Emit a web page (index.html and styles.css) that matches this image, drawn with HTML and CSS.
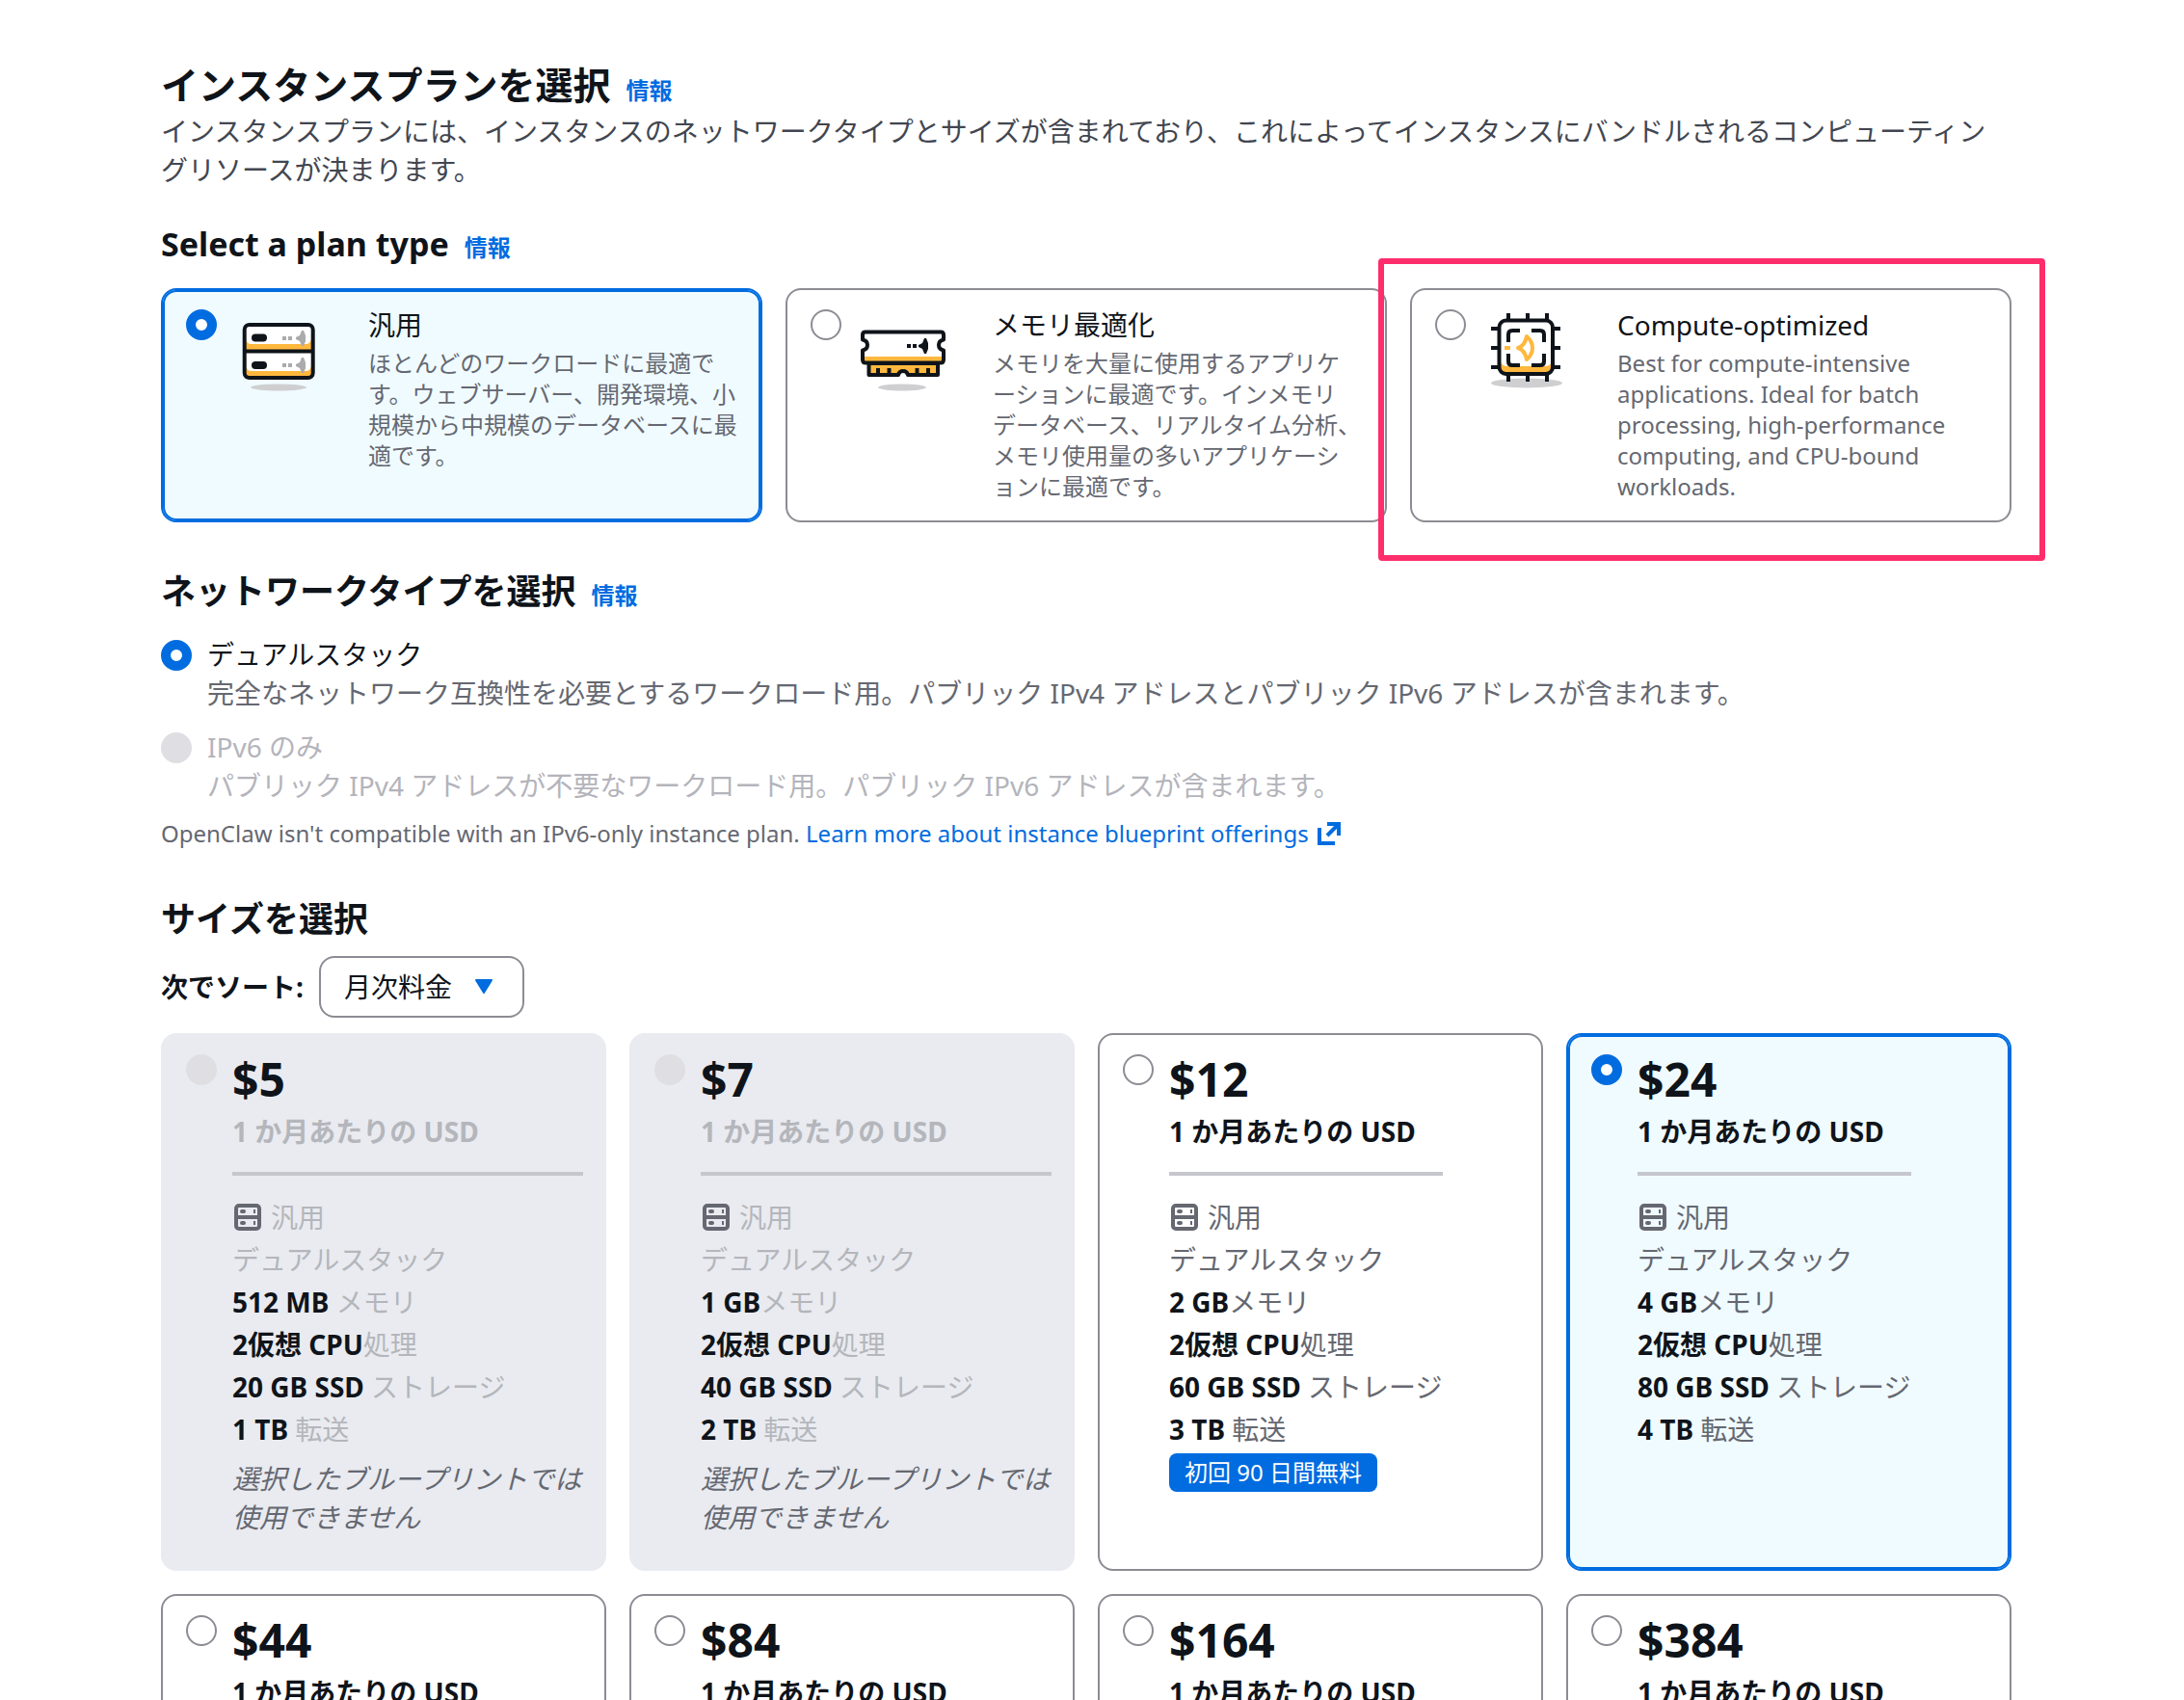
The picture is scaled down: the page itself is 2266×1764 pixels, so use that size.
FILE: index.html
```html
<!DOCTYPE html>
<html lang="ja">
<head>
    <meta charset="UTF-8">
    <meta name="viewport" content="width=device-width, initial-scale=1.0">
    <title>インスタンスプランを選択</title>
    <link rel="stylesheet" href="styles.css">
</head>
<body>
    <svg class="sprite" aria-hidden="true">
        <symbol id="icon-server" viewBox="0 0 16 16">
            <rect x="2" y="2" width="12" height="12" rx="1.5" fill="none" stroke="currentColor" stroke-width="2"/>
            <path d="M2 8h12" stroke="currentColor" stroke-width="2"/>
            <rect x="4" y="4" width="3" height="2" rx="1" fill="currentColor"/>
            <rect x="4" y="10" width="3" height="2" rx="1" fill="currentColor"/>
            <path d="M11.5 4v2M11.5 10v2" stroke="currentColor"/>
        </symbol>
    </svg>

    <main class="page">
        <header class="intro">
            <div class="title-row">
                <h1 class="page-title">インスタンスプランを選択</h1>
                <a class="info" href="#">情報</a>
            </div>
            <p class="page-desc">インスタンスプランには、インスタンスのネットワークタイプとサイズが含まれており、これによってインスタンスにバンドルされるコンピューティングリソースが決まります。</p>
        </header>

        <section class="plan-section">
            <div class="title-row">
                <h2 class="section-title plan-title">Select a plan type</h2>
                <a class="info" href="#">情報</a>
            </div>
            <div class="plan-grid">
                <label class="card plan selected">
                    <input class="radio" type="radio" name="plan" checked>
                    <svg class="plan-icon" viewBox="0 0 96 96" aria-hidden="true">
                        <ellipse cx="48" cy="85" rx="29" ry="3.5" fill="#cfcfd1"/>
                        <rect x="12.7" y="20" width="71" height="55" rx="5" fill="#fff"/>
                        <path d="M14 35q1 5 6 5h56q5 0 6-5v12H14zM14 63q1 5 6 5h56q5 0 6-5v12H14z" fill="#ffb83d"/>
                        <rect x="12.7" y="20" width="71" height="55" rx="5" fill="none" stroke="#0f141a" stroke-width="4"/>
                        <path d="M13 47.5h70" stroke="#0f141a" stroke-width="4"/>
                        <rect x="20" y="29.5" width="16" height="8" rx="4" fill="#0f141a"/>
                        <rect x="20" y="58" width="16" height="8" rx="4" fill="#0f141a"/>
                        <path d="M52 32h4v4h-4zM58 32h4v4h-4zM66 33l4-2 2-5h2l2 5v6l-2 5h-2l-2-5-4-2z" fill="#ababad"/>
                        <path d="M52 60h4v4h-4zM58 60h4v4h-4zM66 61l4-2 2-5h2l2 5v6l-2 5h-2l-2-5-4-2z" fill="#ababad"/>
                    </svg>
                    <span class="plan-text">
                        <span class="plan-name">汎用</span>
                        <span class="plan-desc">ほとんどのワークロードに最適で<br>す。ウェブサーバー、開発環境、小<br>規模から中規模のデータベースに最<br>適です。</span>
                    </span>
                </label>
                <label class="card plan">
                    <input class="radio" type="radio" name="plan">
                    <svg class="plan-icon" viewBox="0 0 96 96" aria-hidden="true">
                        <ellipse cx="47" cy="85" rx="25" ry="3.5" fill="#cfcfd1"/>
                        <path d="M12.5 60h71.5v12H53q-1-4-5-4t-5 4H12.5z" fill="#ffb83d" stroke="#0f141a" stroke-width="4" stroke-linejoin="round"/>
                        <path d="M22 65v7M33.5 65v7M62.5 65v7M74 65v7" stroke="#0f141a" stroke-width="4"/>
                        <path d="M9 27.5h78q3 0 3 3v5q-5 1-5 5.500t5 5.500V56q0 3.5-3 3.5H9q-3 0-3-3.500v-9.500q5-1 5-5.500t-5-5.500v-5q0-3 3-3z" fill="#fff"/>
                        <path d="M7 53h82v5H7z" fill="#ffb83d"/>
                        <path d="M9 27.5h78q3 0 3 3v5q-5 1-5 5.500t5 5.500V56q0 3.5-3 3.5H9q-3 0-3-3.500v-9.500q5-1 5-5.500t-5-5.500v-5q0-3 3-3z" fill="none" stroke="#0f141a" stroke-width="4" stroke-linejoin="round"/>
                        <path d="M52 40h4v4h-4zM58 40h4v4h-4zM64 41l4-2 2-5h2l2 5v6l-2 5h-2l-2-5-4-2z" fill="#0f141a"/>
                    </svg>
                    <span class="plan-text">
                        <span class="plan-name">メモリ最適化</span>
                        <span class="plan-desc">メモリを大量に使用するアプリケ<br>ーションに最適です。インメモリ<br>データベース、リアルタイム分析、<br>メモリ使用量の多いアプリケーシ<br>ョンに最適です。</span>
                    </span>
                </label>
                <label class="card plan highlighted">
                    <input class="radio" type="radio" name="plan">
                    <svg class="plan-icon" viewBox="0 0 96 96" aria-hidden="true">
                        <ellipse cx="47" cy="80.5" rx="37" ry="5" fill="#cfcfd1"/>
                        <path d="M28 8v71M48 8v71M68 8v71M10 24h72M10 44h72M10 64h72" stroke="#0f141a" stroke-width="4"/>
                        <rect x="18.5" y="15.5" width="55.5" height="55.5" rx="7" fill="#fff"/>
                        <path d="M20 59q2 4 7 4h39q5 0 7-4v10H20z" fill="#ffb83d"/>
                        <rect x="18.5" y="15.5" width="55.5" height="55.5" rx="7" fill="none" stroke="#0f141a" stroke-width="4"/>
                        <path d="M28 38V30q0-4 4-4h8M52 26h9q4 0 4 4v8M65 50v8q0 4-4 4h-9M40 62h-8q-4 0-4-4v-8" fill="none" stroke="#0f141a" stroke-width="4"/>
                        <path d="M38 44q7-2 9-12 6 5 6 12t-6 12q-2-10-9-12z" fill="none" stroke="#ffb83d" stroke-width="4" stroke-linejoin="round"/>
                        <path d="M24 42h6v4h-6z" fill="#ffb83d"/>
                    </svg>
                    <span class="plan-text">
                        <span class="plan-name">Compute-optimized</span>
                        <span class="plan-desc">Best for compute-intensive<br>applications. Ideal for batch<br>processing, high-performance<br>computing, and CPU-bound<br>workloads.</span>
                    </span>
                </label>
            </div>
        </section>

        <section class="network-section">
            <div class="title-row">
                <h2 class="section-title">ネットワークタイプを選択</h2>
                <a class="info" href="#">情報</a>
            </div>
            <div class="network-list">
                <label class="network">
                    <input class="radio" type="radio" name="network" checked>
                    <span class="network-text">
                        <span class="network-name">デュアルスタック</span>
                        <span class="network-desc">完全なネットワーク互換性を必要とするワークロード用。パブリック IPv4 アドレスとパブリック IPv6 アドレスが含まれます。</span>
                    </span>
                </label>
                <label class="network disabled">
                    <input class="radio" type="radio" name="network" disabled>
                    <span class="network-text">
                        <span class="network-name">IPv6 のみ</span>
                        <span class="network-desc">パブリック IPv4 アドレスが不要なワークロード用。パブリック IPv6 アドレスが含まれます。</span>
                    </span>
                </label>
            </div>
            <p class="note">OpenClaw isn't compatible with an IPv6-only instance plan. <a class="link" href="#">Learn more about instance blueprint offerings
                <svg class="external" viewBox="0 0 24 24" aria-hidden="true"><path d="M10 2h12v12M22 2L10 14M2 6v16h16" fill="none" stroke="currentColor" stroke-width="4"/></svg></a></p>
        </section>

        <section class="size-section">
            <h2 class="section-title">サイズを選択</h2>
            <div class="sort">
                <label class="sort-label" for="sort">次でソート:</label>
                <span class="select-wrap">
                    <select id="sort" class="select">
                        <option>月次料金</option>
                    </select>
                    <svg class="caret" viewBox="0 0 20 16" aria-hidden="true"><path d="M2 1h16L10 14z" fill="currentColor" stroke="currentColor" stroke-width="2" stroke-linejoin="round"/></svg>
                </span>
            </div>

            <div class="size-grid">
                <label class="card size disabled">
                    <input class="radio" type="radio" name="size" disabled>
                    <span class="size-body">
                        <span class="price">$5</span>
                        <span class="per">1 か月あたりの USD</span>
                        <span class="rule"></span>
                        <span class="spec spec-type"><svg class="spec-icon" aria-hidden="true"><use href="#icon-server"/></svg>汎用</span>
                        <span class="spec">デュアルスタック</span>
                        <span class="spec"><b>512 MB</b> メモリ</span>
                        <span class="spec"><b>2仮想 CPU</b>処理</span>
                        <span class="spec"><b>20 GB SSD</b> ストレージ</span>
                        <span class="spec"><b>1 TB</b> 転送</span>
                        <em class="unavailable">選択したブループリントでは使用できません</em>
                    </span>
                </label>
                <label class="card size disabled">
                    <input class="radio" type="radio" name="size" disabled>
                    <span class="size-body">
                        <span class="price">$7</span>
                        <span class="per">1 か月あたりの USD</span>
                        <span class="rule"></span>
                        <span class="spec spec-type"><svg class="spec-icon" aria-hidden="true"><use href="#icon-server"/></svg>汎用</span>
                        <span class="spec">デュアルスタック</span>
                        <span class="spec"><b>1 GB</b>メモリ</span>
                        <span class="spec"><b>2仮想 CPU</b>処理</span>
                        <span class="spec"><b>40 GB SSD</b> ストレージ</span>
                        <span class="spec"><b>2 TB</b> 転送</span>
                        <em class="unavailable">選択したブループリントでは使用できません</em>
                    </span>
                </label>
                <label class="card size">
                    <input class="radio" type="radio" name="size">
                    <span class="size-body">
                        <span class="price">$12</span>
                        <span class="per">1 か月あたりの USD</span>
                        <span class="rule"></span>
                        <span class="spec spec-type"><svg class="spec-icon" aria-hidden="true"><use href="#icon-server"/></svg>汎用</span>
                        <span class="spec">デュアルスタック</span>
                        <span class="spec"><b>2 GB</b>メモリ</span>
                        <span class="spec"><b>2仮想 CPU</b>処理</span>
                        <span class="spec"><b>60 GB SSD</b> ストレージ</span>
                        <span class="spec"><b>3 TB</b> 転送</span>
                        <span class="badge">初回 90 日間無料</span>
                    </span>
                </label>
                <label class="card size selected">
                    <input class="radio" type="radio" name="size" checked>
                    <span class="size-body">
                        <span class="price">$24</span>
                        <span class="per">1 か月あたりの USD</span>
                        <span class="rule"></span>
                        <span class="spec spec-type"><svg class="spec-icon" aria-hidden="true"><use href="#icon-server"/></svg>汎用</span>
                        <span class="spec">デュアルスタック</span>
                        <span class="spec"><b>4 GB</b>メモリ</span>
                        <span class="spec"><b>2仮想 CPU</b>処理</span>
                        <span class="spec"><b>80 GB SSD</b> ストレージ</span>
                        <span class="spec"><b>4 TB</b> 転送</span>
                    </span>
                </label>
                <label class="card size">
                    <input class="radio" type="radio" name="size">
                    <span class="size-body">
                        <span class="price">$44</span>
                        <span class="per">1 か月あたりの USD</span>
                    </span>
                </label>
                <label class="card size">
                    <input class="radio" type="radio" name="size">
                    <span class="size-body">
                        <span class="price">$84</span>
                        <span class="per">1 か月あたりの USD</span>
                    </span>
                </label>
                <label class="card size">
                    <input class="radio" type="radio" name="size">
                    <span class="size-body">
                        <span class="price">$164</span>
                        <span class="per">1 か月あたりの USD</span>
                    </span>
                </label>
                <label class="card size">
                    <input class="radio" type="radio" name="size">
                    <span class="size-body">
                        <span class="price">$384</span>
                        <span class="per">1 か月あたりの USD</span>
                    </span>
                </label>
            </div>
        </section>
    </main>
</body>
</html>
```
FILE: styles.css
```css
* {
    margin: 0;
    padding: 0;
    box-sizing: border-box;
}

body {
    font-family: "Noto Sans", "Noto Sans CJK JP", sans-serif;
    font-size: 28px;
    line-height: 40px;
    color: #0f141a;
    background: #fff;
    height: 100vh;
    overflow: hidden;
}

.sprite {
    display: none;
}

.page {
    padding: 60px 179px 0 167px;
}

.title-row {
    display: flex;
    align-items: baseline;
    gap: 16px;
}

.page-title {
    font-size: 39px;
    line-height: 56px;
}

.section-title {
    font-size: 36px;
    line-height: 48px;
}

.plan-title {
    font-size: 34px;
}

.info {
    font-size: 24px;
    line-height: 32px;
    font-weight: 700;
    color: #006ce0;
    text-decoration: none;
}

.page-desc {
    color: #424650;
}

.plan-section {
    margin-top: 33px;
}

.plan-grid {
    display: grid;
    grid-template-columns: repeat(3, 1fr);
    gap: 24px;
    margin-top: 22px;
}

.card {
    display: flex;
    align-items: flex-start;
    border: 2px solid #8c8c94;
    border-radius: 16px;
    background: #fff;
}

.card.selected {
    border-color: #006ce0;
    background: #f0fbff;
    box-shadow: inset 0 0 0 2px #006ce0;
}

.card.disabled {
    border-color: #e9ebf0;
    background: #e9ebf0;
}

.radio {
    appearance: none;
    flex: none;
    width: 32px;
    height: 32px;
    border: 2px solid #8c8c94;
    border-radius: 50%;
    background: #fff;
}

.radio:checked {
    border: 10px solid #006ce0;
}

.radio:disabled {
    border-color: #dedee3;
    background: #dedee3;
}

.plan {
    padding: 16px 24px 19px;
}

.plan .radio {
    margin-top: 4px;
}

.plan-icon {
    flex: none;
    width: 96px;
    height: 96px;
    margin-left: 16px;
}

.plan-text {
    display: flex;
    flex-direction: column;
    gap: 4px;
    margin-left: 45px;
    white-space: nowrap;
}

.plan-desc {
    font-size: 24px;
    line-height: 32px;
    color: #656871;
}

.highlighted {
    position: relative;
}

.highlighted::after {
    content: "";
    position: absolute;
    inset: -33px -37px -42px -35px;
    border: 6px solid #ff2d6b;
    border-radius: 4px;
    pointer-events: none;
}

.network-section {
    margin-top: 48px;
}

.network-list {
    display: flex;
    flex-direction: column;
    gap: 16px;
    margin-top: 21px;
}

.network {
    display: flex;
    gap: 16px;
}

.network .radio {
    margin-top: 5px;
}

.network-text {
    display: flex;
    flex-direction: column;
}

.network-desc {
    color: #656871;
}

.network.disabled,
.network.disabled .network-desc {
    color: #b4b4bb;
}

.note {
    margin-top: 14px;
    font-size: 24px;
    line-height: 32px;
    color: #656871;
}

.link {
    color: #006ce0;
    text-decoration: none;
}

.external {
    width: 24px;
    height: 24px;
    margin-left: 3px;
    vertical-align: -3px;
}

.size-section {
    margin-top: 49px;
}

.sort {
    display: flex;
    align-items: center;
    gap: 16px;
    margin: 14px 0 16px;
}

.sort-label {
    font-weight: 700;
}

.select-wrap {
    position: relative;
}

.select {
    display: block;
    appearance: none;
    height: 64px;
    padding: 0 72px 0 24px;
    border: 2px solid #8c8c94;
    border-radius: 16px;
    background: #fff;
    font: inherit;
    color: inherit;
}

.caret {
    position: absolute;
    top: 24px;
    right: 32px;
    width: 20px;
    height: 16px;
    color: #006ce0;
    pointer-events: none;
}

.size-grid {
    display: grid;
    grid-template-columns: repeat(4, 1fr);
    gap: 24px;
}

.size {
    gap: 16px;
    padding: 12px 22px 34px 24px;
}

.size .radio {
    margin-top: 8px;
}

.size-body {
    display: flex;
    flex-direction: column;
}

.price {
    font-size: 48px;
    line-height: 68px;
    font-weight: 700;
}

.per {
    font-weight: 700;
}

.rule {
    height: 4px;
    margin: 22px 0 21px;
    background: #c6c6cd;
}

.spec {
    line-height: 44px;
    color: #656871;
}

.spec-type {
    display: flex;
    align-items: center;
    gap: 8px;
}

.spec-icon {
    width: 32px;
    height: 32px;
    color: #656871;
}

.size.disabled .per,
.size.disabled .spec {
    color: #b4b6bb;
}

.size .spec b {
    color: #0f141a;
}

.unavailable {
    margin-top: 9px;
    color: #656871;
}

.badge {
    align-self: flex-start;
    margin-top: 3px;
    padding: 0 16px;
    border-radius: 8px;
    background: #006ce0;
    color: #fff;
    font-size: 24px;
}
```
